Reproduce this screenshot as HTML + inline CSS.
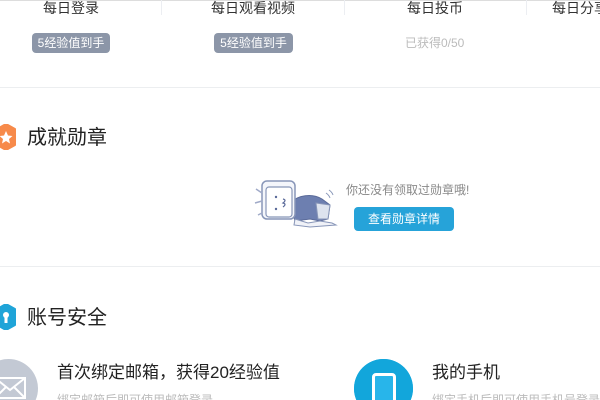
<!DOCTYPE html>
<html style="overflow:hidden;width:600px;height:400px"><head><meta charset="utf-8"><style>
*{margin:0;padding:0;box-sizing:border-box}
body{width:600px;height:400px;overflow:hidden;background:#fff;position:relative;font-family:"Liberation Sans","Noto Sans CJK SC",sans-serif;color:#222}
.a{position:absolute;white-space:nowrap}
.lbl{font-size:14px;top:-1px;width:160px;text-align:center;line-height:18px;color:#333}
.sep{position:absolute;top:0;width:1px;height:15px;background:#eceef2}
.badge{position:absolute;top:33px;height:20px;background:#8c96a8;border-radius:4px;color:#fff;font-size:12px;line-height:20px;text-align:center}
.hr{position:absolute;left:0;width:600px;height:1px;background:#eceef0}
.title{font-size:20px;line-height:24px;color:#222}
.t2{font-size:17px;line-height:22px;color:#222}
.sub{font-size:12px;color:#bbb;line-height:14px}
</style></head><body>
<div class="a" style="left:0;top:0;width:600px;height:1px;background:#ddd"></div>
<div class="a lbl" style="left:-9px">每日登录</div>
<div class="a lbl" style="left:173px">每日观看视频</div>
<div class="a lbl" style="left:355px">每日投币</div>
<div class="a" style="left:552px;top:-1px;font-size:14px;line-height:18px;color:#333">每日分享</div>
<div class="sep" style="left:161px"></div>
<div class="sep" style="left:344px"></div>
<div class="sep" style="left:526px"></div>
<div class="badge" style="left:32px;width:78px">5经验值到手</div>
<div class="badge" style="left:214px;width:79px">5经验值到手</div>
<div class="a" style="left:405px;top:36px;font-size:12px;color:#bbb;line-height:14px">已获得0/50</div>
<div class="hr" style="top:87px"></div>

<svg class="a" style="left:-4px;top:124px" width="20" height="26" viewBox="0 0 20 26"><path d="M10 0 L19 5 L19 21 L10 26 L1 21 L1 5Z" fill="#f78a4a" stroke="#f78a4a" stroke-width="2" stroke-linejoin="round"/><path d="M10 7 L12 11.5 L16.5 12 L13 15 L14 19.5 L10 17 L6 19.5 L7 15 L3.5 12 L8 11.5Z" fill="#fff"/></svg>
<div class="a title" style="left:27px;top:126px">成就勋章</div>

<svg class="a" style="left:250px;top:175px" width="95" height="55" viewBox="0 0 95 55">
<path d="M40 28 C48 20 62 18 72 24 L80 30 L78 44 L70 46 L60 44 L45 46Z" fill="#6d7fb0" stroke="#5a6a99" stroke-width="1"/>
<path d="M66 28 L80 30 L78 44 L68 44Z" fill="#dde3ee" stroke="#8896b8"/>
<path d="M45 44 L58 48 L70 46 L82 48 L86 50 L60 52 L44 50Z" fill="#f0f2f8" stroke="#8896b8"/>
<rect x="12" y="6" width="33" height="38" rx="5" fill="#f4f6fb" stroke="#8896b8" stroke-width="1.5"/>
<rect x="16" y="12" width="26" height="30" rx="3" fill="#fff" stroke="#8896b8" stroke-width="1.2"/>
<path d="M6 14 L12 18 M5 28 L12 26 M8 40 L12 38" stroke="#a0aac8" stroke-width="1.5"/>
<circle cx="26" cy="22" r="1.2" fill="#5a6a99"/><circle cx="26" cy="34" r="1.2" fill="#5a6a99"/>
<path d="M33 24 q4 1 0 4 q4 1 0 4" stroke="#5a6a99" fill="none" stroke-width="1.2"/>
<path d="M76 18 q3 2 4 5 M79 15 q3 2 4 5" stroke="#8896b8" fill="none"/>
</svg>
<div class="a" style="left:346px;top:183px;font-size:12px;color:#888;line-height:14px">你还没有领取过勋章哦!</div>
<div class="a" style="left:354px;top:207px;width:100px;height:24px;background:#26a3d9;border-radius:4px;color:#fff;font-size:12px;line-height:24px;text-align:center">查看勋章详情</div>
<div class="hr" style="top:266px"></div>

<svg class="a" style="left:-4px;top:304px" width="20" height="26" viewBox="0 0 20 26"><path d="M10 0 L19 5 L19 21 L10 26 L1 21 L1 5Z" fill="#1fa4d8" stroke="#1fa4d8" stroke-width="2" stroke-linejoin="round"/><circle cx="10" cy="11" r="3" fill="#fff"/><rect x="8.5" y="12" width="3" height="7" fill="#fff"/></svg>
<div class="a title" style="left:27px;top:306px">账号安全</div>

<div class="a" style="left:0;top:0;width:600px;height:400px;overflow:hidden">
<div class="a" style="left:-21px;top:359px;width:59px;height:59px;border-radius:50%;background:#c3c9d4"></div>
<svg class="a" style="left:-6px;top:377px" width="32" height="22" viewBox="0 0 32 22"><rect x="1" y="1" width="30" height="20" fill="none" stroke="#fff" stroke-width="2"/><path d="M1 1 L16 13 L31 1 M1 21 L12 10 M31 21 L20 10" stroke="#fff" stroke-width="2" fill="none"/></svg>
<div class="a" style="left:354px;top:359px;width:59px;height:59px;border-radius:50%;background:#22b8ee;overflow:hidden"><div style="position:absolute;left:30px;top:-20px;width:60px;height:100px;background:#12a6db;transform:rotate(40deg);transform-origin:0 0"></div></div>
<div class="a" style="left:372px;top:373px;width:24px;height:34px;border:3px solid #fff;border-radius:4px;background:#28b5ea"></div>
<div class="a sub" style="left:57px;top:393px">绑定邮箱后即可使用邮箱登录</div>
<div class="a sub" style="left:432px;top:393px">绑定手机后即可使用手机号登录</div>
</div>
<div class="a t2" style="left:57px;top:362px">首次绑定邮箱，获得20经验值</div>
<div class="a t2" style="left:432px;top:362px">我的手机</div>
</body></html>
